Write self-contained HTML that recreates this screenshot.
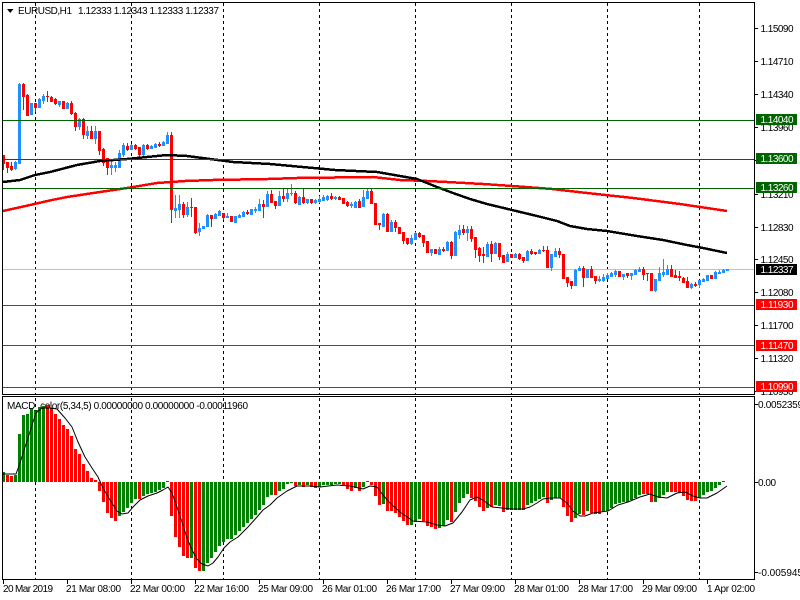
<!DOCTYPE html>
<html lang="en">
<head>
<meta charset="utf-8">
<title>EURUSD,H1</title>
<style>
html,body{margin:0;padding:0;background:#fff;width:800px;height:600px;overflow:hidden}
svg{display:block}
text{font-family:"Liberation Sans",sans-serif;font-size:10px;fill:#000}
.w{fill:#fff}
</style>
</head>
<body>
<svg width="800" height="600" viewBox="0 0 800 600" xmlns="http://www.w3.org/2000/svg">
<rect width="800" height="600" fill="#fff"/>
<g shape-rendering="crispEdges" fill="none">
<!-- grid -->
<path stroke="#000" stroke-dasharray="3 3" d="M35.5 3V394M131.5 3V394M223.5 3V394M319.5 3V394M415.5 3V394M511.5 3V394M607.5 3V394M699.5 3V394M35.5 398V579M131.5 398V579M223.5 398V579M319.5 398V579M415.5 398V579M511.5 398V579M607.5 398V579M699.5 398V579"/>
<path stroke="#c0c0c0" d="M3 269.5H754"/>
<!-- candle wicks -->
<path stroke="#ff0000" d="M3.5 155V170M7.5 162V173M11.5 162V171M23.5 83V110M27.5 94V116M35.5 103V112M47.5 91V102M51.5 96V102M55.5 98V105M63.5 101V109M71.5 101V115M75.5 112V131M83.5 118V139M91.5 126V139M99.5 131V155M103.5 148V166M107.5 158V175M127.5 143V151M135.5 144V150M139.5 147V157M147.5 144V150M159.5 142V147M171.5 132V223M183.5 202V218M191.5 198V217M195.5 207V234M211.5 215V227M223.5 213V220M231.5 216V222M247.5 210V215M263.5 200V218M271.5 190V203M275.5 201V209M283.5 189V202M295.5 191V204M303.5 189V204M311.5 199V204M331.5 193V200M339.5 196V200M343.5 198V204M347.5 201V207M359.5 199V208M371.5 189V204M375.5 203V225M379.5 223V230M387.5 213V232M395.5 220V232M399.5 227V234M403.5 232V244M407.5 238V245M419.5 232V238M423.5 235V247M427.5 241V253M435.5 249V254M443.5 247V252M451.5 241V259M463.5 225V235M471.5 226V242M475.5 237V258M479.5 247V262M483.5 247V263M491.5 241V262M499.5 243V260M503.5 255V263M511.5 254V258M519.5 253V260M523.5 257V263M531.5 249V255M535.5 252V255M543.5 246V252M547.5 246V268M559.5 248V258M563.5 254V279M567.5 277V287M571.5 281V289M583.5 266V287M591.5 266V278M595.5 276V284M619.5 271V277M627.5 273V278M643.5 267V280M647.5 273V281M651.5 273V291M671.5 265V277M675.5 270V278M679.5 271V281M683.5 277V283M687.5 277V288M695.5 282V287M711.5 275V279"/>
<path stroke="#1e90ff" d="M15.5 161V170M19.5 83V164M31.5 103V115M39.5 98V108M43.5 94V104M59.5 101V107M67.5 102V109M79.5 118V130M87.5 126V139M95.5 126V144M111.5 160V175M115.5 162V172M119.5 150V168M123.5 143V157M131.5 144V150M143.5 144V157M151.5 145V149M155.5 143V148M163.5 141V146M167.5 132V144M175.5 195V218M179.5 195V218M187.5 202V217M199.5 223V236M203.5 226V229M207.5 214V227M215.5 213V219M219.5 210V216M227.5 213V218M235.5 216V223M239.5 214V218M243.5 211V217M251.5 209V215M255.5 207V213M259.5 199V211M267.5 191V207M279.5 191V206M287.5 189V202M291.5 184V196M299.5 196V205M307.5 199V204M315.5 199V204M319.5 196V203M323.5 195V201M327.5 195V201M335.5 196V200M351.5 202V208M355.5 201V208M363.5 190V207M367.5 189V199M383.5 213V227M391.5 220V232M411.5 235V245M415.5 232V240M431.5 249V256M439.5 247V255M447.5 241V251M455.5 231V256M459.5 225V239M467.5 226V241M487.5 242V257M495.5 242V254M507.5 252V262M515.5 253V258M527.5 250V261M539.5 249V254M551.5 254V271M555.5 248V257M575.5 269V286M579.5 266V271M587.5 269V278M599.5 276V282M603.5 274V282M607.5 273V279M611.5 272V277M615.5 270V277M623.5 274V280M631.5 273V280M635.5 269V275M639.5 267V272M655.5 279V292M659.5 267V281M663.5 259V277M667.5 265V275M691.5 283V289M699.5 280V288M703.5 278V282M707.5 275V281M715.5 271V279M719.5 270V274M723.5 269V273M727.5 269V271"/>
</g>
<g shape-rendering="crispEdges" fill="none" stroke-width="3">
<!-- candle bodies -->
<path stroke="#ff0000" d="M3.5 155V164M7.5 162V168M11.5 166V170M23.5 84V97M27.5 95V116M35.5 103V108M47.5 96V97M51.5 97V102M55.5 99V104M63.5 101V109M71.5 103V114M75.5 113V127M83.5 119V135M91.5 131V139M99.5 131V151M103.5 149V163M107.5 158V168M127.5 146V150M135.5 145V149M139.5 147V155M147.5 145V149M159.5 144V146M171.5 135V210M183.5 204V215M191.5 207V208M195.5 207V233M211.5 215V219M223.5 213V218M231.5 216V222M247.5 212V214M263.5 204V207M271.5 194V203M275.5 201V206M283.5 196V199M295.5 193V203M303.5 197V203M311.5 199V203M331.5 196V199M339.5 197V200M343.5 198V204M347.5 202V206M359.5 201V208M371.5 191V204M375.5 203V225M379.5 223V225M387.5 214V232M395.5 222V228M399.5 227V234M403.5 232V241M407.5 238V244M419.5 233V237M423.5 235V243M427.5 241V253M435.5 249V254M443.5 249V251M451.5 242V256M463.5 229V233M471.5 229V239M475.5 237V250M479.5 248V256M483.5 254V256M491.5 244V254M499.5 243V257M503.5 255V263M511.5 254V258M519.5 254V259M523.5 257V261M531.5 251V254M535.5 252V254M543.5 250V251M547.5 250V268M559.5 251V255M563.5 254V279M567.5 277V283M571.5 281V286M583.5 268V278M591.5 269V278M595.5 276V281M619.5 271V277M627.5 273V276M643.5 269V275M647.5 273V274M651.5 273V291M671.5 269V277M675.5 275V278M679.5 276V278M683.5 278V283M687.5 281V288M695.5 284V286M711.5 275V279"/>
<path stroke="#1e90ff" d="M15.5 162V169M19.5 84V164M31.5 103V115M39.5 99V108M43.5 96V101M59.5 101V105M67.5 103V109M79.5 119V127M87.5 131V136M95.5 131V139M111.5 165V168M115.5 165V168M119.5 153V168M123.5 145V155M131.5 145V150M143.5 145V155M151.5 146V149M155.5 144V148M163.5 142V146M167.5 135V144M175.5 208V211M179.5 204V210M187.5 207V215M199.5 228V232M203.5 226V229M207.5 215V227M215.5 214V219M219.5 211V216M227.5 216V218M235.5 216V223M239.5 215V218M243.5 212V217M251.5 209V215M255.5 209V211M259.5 204V211M267.5 194V207M279.5 196V206M287.5 193V199M291.5 193V194M299.5 197V205M307.5 199V203M315.5 200V203M319.5 199V202M323.5 197V201M327.5 196V200M335.5 197V199M351.5 204V206M355.5 202V208M363.5 197V207M367.5 191V199M383.5 214V227M391.5 222V232M411.5 238V244M415.5 233V240M431.5 249V253M439.5 249V255M447.5 242V251M455.5 232V256M459.5 230V235M467.5 229V233M487.5 244V257M495.5 243V254M507.5 254V262M515.5 254V258M527.5 251V261M539.5 250V254M551.5 254V268M555.5 251V257M575.5 270V286M579.5 268V271M587.5 269V278M599.5 279V281M603.5 277V281M607.5 275V279M611.5 273V277M615.5 271V275M623.5 274V277M631.5 273V276M635.5 270V275M639.5 269V272M655.5 279V291M659.5 273V281M663.5 272V275M667.5 269V275M691.5 284V288M699.5 280V285M703.5 279V282M707.5 275V281M715.5 272V279M719.5 272V274M723.5 270V273M727.5 269V271"/>
<!-- histogram -->
<path stroke="#008000" d="M3.5 482V472M15.5 482V475M19.5 482V434M23.5 482V415M27.5 482V414M31.5 482V408M35.5 482V410M39.5 482V407M43.5 482V406M119.5 482V516M123.5 482V512M127.5 482V508M131.5 482V503M135.5 482V499M143.5 482V496M147.5 482V494M151.5 482V493M155.5 482V492M159.5 482V490M163.5 482V488M167.5 482V481M191.5 482V558M203.5 482V571M207.5 482V563M211.5 482V558M215.5 482V552M219.5 482V546M223.5 482V542M227.5 482V539M231.5 482V539M235.5 482V535M239.5 482V531M243.5 482V527M247.5 482V523M251.5 482V519M255.5 482V515M259.5 482V510M263.5 482V505M267.5 482V497M271.5 482V495M279.5 482V491M283.5 482V489M287.5 482V484M291.5 482V483M299.5 482V485M307.5 482V485M319.5 482V487M323.5 482V485M327.5 482V485M331.5 482V485M335.5 482V484M339.5 482V484M355.5 482V488M363.5 482V487M367.5 482V481M383.5 482V504M411.5 482V525M415.5 482V522M419.5 482V519M439.5 482V528M443.5 482V526M447.5 482V520M455.5 482V512M459.5 482V503M463.5 482V498M467.5 482V494M487.5 482V508M495.5 482V505M499.5 482V506M507.5 482V510M511.5 482V510M515.5 482V510M519.5 482V510M527.5 482V505M531.5 482V503M535.5 482V501M539.5 482V499M543.5 482V497M551.5 482V500M555.5 482V498M559.5 482V498M575.5 482V518M579.5 482V514M587.5 482V511M603.5 482V512M607.5 482V511M611.5 482V508M615.5 482V504M619.5 482V503M623.5 482V502M627.5 482V502M631.5 482V500M635.5 482V498M639.5 482V495M655.5 482V502M659.5 482V498M663.5 482V495M667.5 482V492M699.5 482V498M703.5 482V495M707.5 482V492M711.5 482V491M715.5 482V488M719.5 482V485M723.5 482V481"/>
<path stroke="#ff0000" d="M7.5 482V475M11.5 482V476M47.5 482V405M51.5 482V408M55.5 482V414M59.5 482V419M63.5 482V425M67.5 482V429M71.5 482V436M75.5 482V449M79.5 482V454M83.5 482V464M87.5 482V471M91.5 482V478M95.5 482V480M99.5 482V491M103.5 482V502M107.5 482V513M111.5 482V518M115.5 482V521M139.5 482V499M171.5 482V516M175.5 482V537M179.5 482V547M183.5 482V556M187.5 482V558M195.5 482V568M199.5 482V571M275.5 482V495M295.5 482V486M303.5 482V487M311.5 482V487M315.5 482V488M343.5 482V485M347.5 482V489M351.5 482V491M359.5 482V491M371.5 482V485M375.5 482V496M379.5 482V505M387.5 482V511M391.5 482V511M395.5 482V513M399.5 482V517M403.5 482V521M407.5 482V525M423.5 482V521M427.5 482V526M431.5 482V527M435.5 482V529M451.5 482V522M471.5 482V498M475.5 482V501M479.5 482V507M483.5 482V511M491.5 482V507M503.5 482V512M523.5 482V510M547.5 482V503M563.5 482V507M567.5 482V516M571.5 482V522M583.5 482V515M591.5 482V513M595.5 482V514M599.5 482V514M643.5 482V494M647.5 482V494M651.5 482V502M671.5 482V492M675.5 482V492M679.5 482V493M683.5 482V496M687.5 482V500M691.5 482V501M695.5 482V501"/>
</g>
<!-- moving averages -->
<g fill="none" stroke-width="2.5" shape-rendering="crispEdges">
<polyline stroke="#ff0000" points="3,211 30,205 52,200 67,197 100,192 127,188 157,183 185,181 213,180 268,179 297,178 373,177 400,180 427,181 447,182 483,184 512,186 552,189 587,193 633,198 680,204 727,211"/>
<polyline stroke="#000" points="3,182 20,180 35,175 50,172 77,165 100,161 127,159 147,157 167,155 187,156 210,159 233,162 270,164 335,170 377,172 400,176 417,179 437,187 453,193 470,199 487,204 512,210 537,216 557,221 570,226 587,229 607,231 637,236 663,240 687,245 703,248 727,253"/>
</g>
<!-- signal line -->
<polyline fill="none" stroke="#000" stroke-width="1" stroke-linejoin="round" points="3,474 16,474 20,463 24,450 28,438 32,425 36,413 42,408 50,408 57,409 65,418 72,427 78,442 85,457 92,468 98,477 103,488 110,500 117,511 122,514 128,513 133,507 140,500 148,496 157,493 163,490 168,487 172,493 177,507 182,522 187,538 192,550 197,559 202,564 208,566 213,563 218,557 224,548 230,542 238,537 248,527 257,517 263,510 270,505 277,498 287,491 297,486 310,486 320,487 337,485 350,486 363,489 370,486 377,487 383,495 390,503 400,512 413,521 427,522 437,525 445,526 453,523 462,512 470,500 477,497 483,500 492,507 502,508 512,509 523,509 530,507 537,503 543,499 550,498 560,498 567,503 573,511 580,516 585,516 593,513 608,511 618,505 628,502 640,497 650,494 658,497 667,498 677,493 685,492 693,496 700,498 707,498 717,493 727,486"/>
<g shape-rendering="crispEdges" fill="none">
<!-- horizontal levels -->
<path stroke="#006400" d="M3 120.5H754M3 159.5H754M3 188.5H754"/>
<path stroke="#ff0000" d="M3 305.5H754M3 345.5H754M3 387.5H754"/>
<!-- frames -->
<path stroke="#000" d="M2.5 2V395M2 2.5H755M2 394.5H755M754.5 2V395M2.5 396V580M2 396.5H755M2 579.5H755M754.5 396V580"/>
<!-- ticks -->
<path stroke="#000" d="M755 28.5h3M755 61.5h3M755 94.5h3M755 127.5h3M755 160.5h3M755 194.5h3M755 227.5h3M755 259.5h3M755 292.5h3M755 325.5h3M755 358.5h3M755 391.5h3M755 404.5h3M755 482.5h3M755 572.5h3"/>
<path stroke="#000" d="M3.5 580v4M67.5 580v4M131.5 580v4M195.5 580v4M259.5 580v4M323.5 580v4M387.5 580v4M451.5 580v4M515.5 580v4M579.5 580v4M643.5 580v4M707.5 580v4"/>
</g>
<!-- header -->
<polygon points="7,9 13.5,9 10.2,13" fill="#000"/>
<text x="18" y="14" textLength="54" lengthAdjust="spacing">EURUSD,H1</text>
<text x="78" y="14" textLength="141" lengthAdjust="spacing">1.12333 1.12343 1.12333 1.12337</text>
<text x="7" y="409" textLength="241" lengthAdjust="spacing">MACD_color(5,34,5) 0.00000000 0.00000000 -0.00011960</text>
<!-- price axis -->
<text x="760.5" y="32" textLength="33">1.15090</text>
<text x="760.5" y="65" textLength="33">1.14710</text>
<text x="760.5" y="98" textLength="33">1.14340</text>
<text x="760.5" y="131" textLength="33">1.13960</text>
<text x="760.5" y="198" textLength="33">1.13210</text>
<text x="760.5" y="231" textLength="33">1.12830</text>
<text x="760.5" y="263" textLength="33">1.12450</text>
<text x="760.5" y="296" textLength="33">1.12080</text>
<text x="760.5" y="329" textLength="33">1.11700</text>
<text x="760.5" y="362" textLength="33">1.11320</text>
<text x="760.5" y="395" textLength="33">1.10950</text>
<!-- level boxes -->
<g shape-rendering="crispEdges">
<rect x="756" y="114" width="41" height="11" fill="#006400"/>
<rect x="756" y="153" width="41" height="11" fill="#006400"/>
<rect x="756" y="182" width="41" height="11" fill="#006400"/>
<rect x="756" y="264" width="41" height="11" fill="#000"/>
<rect x="756" y="299" width="41" height="11" fill="#ff0000"/>
<rect x="756" y="340" width="41" height="11" fill="#ff0000"/>
<rect x="756" y="381" width="41" height="11" fill="#ff0000"/>
</g>
<text class="w" x="760.5" y="123" textLength="33">1.14040</text>
<text class="w" x="760.5" y="162" textLength="33">1.13600</text>
<text class="w" x="760.5" y="191" textLength="33">1.13260</text>
<text class="w" x="760.5" y="273" textLength="33">1.12337</text>
<text class="w" x="760.5" y="308" textLength="33">1.11930</text>
<text class="w" x="760.5" y="349" textLength="33">1.11470</text>
<text class="w" x="760.5" y="390" textLength="33">1.10990</text>
<!-- macd axis -->
<text x="758" y="408" textLength="45">0.0052359</text>
<text x="758" y="486" textLength="18">0.00</text>
<text x="758" y="576" textLength="45">-0.005945</text>
<!-- time axis -->
<text x="3" y="592" textLength="50">20 Mar 2019</text>
<text x="66" y="592" textLength="55">21 Mar 08:00</text>
<text x="130" y="592" textLength="55">22 Mar 00:00</text>
<text x="194" y="592" textLength="55">22 Mar 16:00</text>
<text x="258" y="592" textLength="55">25 Mar 09:00</text>
<text x="322" y="592" textLength="55">26 Mar 01:00</text>
<text x="386" y="592" textLength="55">26 Mar 17:00</text>
<text x="450" y="592" textLength="55">27 Mar 09:00</text>
<text x="514" y="592" textLength="55">28 Mar 01:00</text>
<text x="578" y="592" textLength="55">28 Mar 17:00</text>
<text x="642" y="592" textLength="55">29 Mar 09:00</text>
<text x="707" y="592" textLength="48">1 Apr 02:00</text>
</svg>
</body>
</html>
